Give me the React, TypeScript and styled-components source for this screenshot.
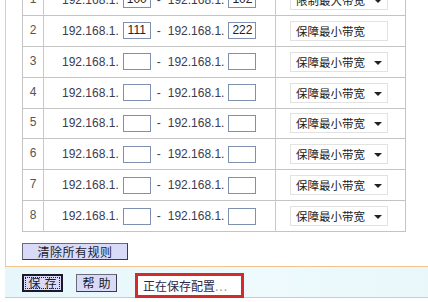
import React from 'react';
import styled, { createGlobalStyle } from 'styled-components';

type Rule = {
  id: number;
  from: string;
  to: string;
  mode: string;
  noArrow?: boolean;
};

const rules: Rule[] = [
  { id: 1, from: '100', to: '102', mode: '限制最大带宽' },
  { id: 2, from: '111', to: '222', mode: '保障最小带宽', noArrow: true },
  { id: 3, from: '', to: '', mode: '保障最小带宽' },
  { id: 4, from: '', to: '', mode: '保障最小带宽' },
  { id: 5, from: '', to: '', mode: '保障最小带宽' },
  { id: 6, from: '', to: '', mode: '保障最小带宽' },
  { id: 7, from: '', to: '', mode: '保障最小带宽' },
  { id: 8, from: '', to: '', mode: '保障最小带宽' },
];

const GlobalStyle = createGlobalStyle`
  html, body {
    margin: 0;
    padding: 0;
    background: #ffffff;
    overflow: hidden;
  }
  body {
    font-family: "Liberation Sans", "Noto Sans CJK SC", sans-serif;
    font-size: 12px;
    color: #333;
  }
`;

const Frame = styled.div`
  width: 428px;
  height: 302px;
  display: flex;
  flex-direction: column;
  overflow: hidden;
`;

const Main = styled.div`
  height: 266px;
  margin-left: 5px;
  padding-left: 16px;
  border-left: 1px solid #f3c98e;
  border-bottom: 1px solid #f1c58a;
  overflow: hidden;
  display: flex;
  flex-direction: column;
  align-items: flex-start;
`;

const Table = styled.div`
  margin-top: -15px;
  width: 382px;
  border-left: 1px solid #c4c4c4;
  border-right: 1px solid #c4c4c4;
`;

const Row = styled.div`
  display: grid;
  grid-template-columns: 21px 232px 127px;
  height: 30px;
  border-bottom: 1px solid #c4c4c4;
  &:nth-child(odd) {
    height: 29.8px;
  }
`;

const Cell = styled.div`
  display: flex;
  align-items: center;
  border-right: 1px solid #c8c8c8;
  &:last-child {
    border-right: none;
  }
`;

const NumCell = styled(Cell)`
  justify-content: center;
  color: #555;
  font-size: 12px;
  padding-bottom: 2px;
`;

const RangeCell = styled(Cell)`
  padding-left: 18px;
  color: #3c3c50;
`;

const Ip = styled.span`
  font-size: 12px;
  white-space: nowrap;
`;

const Dash = styled.span`
  margin: 0 7px 0 6px;
  color: #444;
`;

const IpBox = styled.div`
  width: 26px;
  height: 15px;
  margin-left: 4px;
  border: 1px solid #7f8fb0;
  background: #fff;
  font-size: 12px;
  line-height: 15px;
  text-align: center;
  color: #222;
`;

const SelectCell = styled(Cell)`
  padding-left: 14px;
`;

const Select = styled.div`
  width: 86px;
  height: 18px;
  border: 1px solid #e2e2e2;
  background: #fff;
  display: flex;
  align-items: center;
  justify-content: space-between;
  padding: 0 5px 0 5px;
  box-sizing: content-box;
  font-family: "Noto Sans CJK SC", sans-serif;
  font-size: 11.5px;
  color: #222;
`;

const Arrow = styled.span<{ $hidden?: boolean }>`
  width: 0;
  height: 0;
  border-left: 4px solid transparent;
  border-right: 4px solid transparent;
  border-top: 4px solid #222;
  margin-top: 2px;
  visibility: ${(p) => (p.$hidden ? 'hidden' : 'visible')};
`;

const Button = styled.button<{ $focused?: boolean }>`
  height: 18px;
  padding: 0;
  background: #d9daf7;
  border: 1px solid #3a3a4a;
  border-top-color: #6a6a7a;
  border-left-color: #6a6a7a;
  font-family: "Noto Sans CJK SC", sans-serif;
  font-size: 12px;
  line-height: 14px;
  color: #1a1a2a;
  cursor: pointer;
  ${(p) =>
    p.$focused &&
    `
    border: 2px solid #1a1a2a;
    outline: 1px dotted #222;
    outline-offset: -4px;
  `}
`;

const ClearButton = styled(Button)`
  margin-top: 11px;
  width: 106px;
  height: 17px;
  letter-spacing: 0.5px;
`;

const Footer = styled.div`
  height: 31px;
  margin-left: 5px;
  background: linear-gradient(to right, #e6f6fb, #eefafd 60%, #e9f7fb);
  border-bottom: 1px solid #f1c58a;
  display: flex;
  align-items: flex-start;
  padding: 6px 0 0 17px;
  box-sizing: border-box;
  gap: 13px;
`;

const SmallButton = styled(Button)`
  width: 41px;
  margin-top: 1px;
  letter-spacing: 4px;
  text-indent: 4px;
`;

const Status = styled.div`
  margin-left: 5px;
  width: 98px;
  height: 19px;
  border: 3px solid #d32a2a;
  background: #fff;
  display: flex;
  align-items: center;
  padding-left: 5px;
  font-family: "Noto Sans CJK SC", sans-serif;
  font-size: 12px;
  color: #28284a;
  white-space: nowrap;
  overflow: hidden;
`;

const Dots = styled.span`
  color: #9a9aaa;
  letter-spacing: 1px;
`;

const App = () => {
  return (
    <>
      <GlobalStyle />
      <Frame>
        <Main>
          <Table>
            {rules.map((r) => (
              <Row key={r.id}>
                <NumCell>{r.id}</NumCell>
                <RangeCell>
                  <Ip>192.168.1.</Ip>
                  <IpBox>{r.from}</IpBox>
                  <Dash>-</Dash>
                  <Ip>192.168.1.</Ip>
                  <IpBox>{r.to}</IpBox>
                </RangeCell>
                <SelectCell>
                  <Select>
                    <span>{r.mode}</span>
                    <Arrow $hidden={r.noArrow} />
                  </Select>
                </SelectCell>
              </Row>
            ))}
          </Table>
          <ClearButton>清除所有规则</ClearButton>
        </Main>
        <Footer>
          <SmallButton $focused>保存</SmallButton>
          <SmallButton>帮助</SmallButton>
          <Status>
            正在保存配置<Dots>...</Dots>
          </Status>
        </Footer>
      </Frame>
    </>
  );
};

export default App;
